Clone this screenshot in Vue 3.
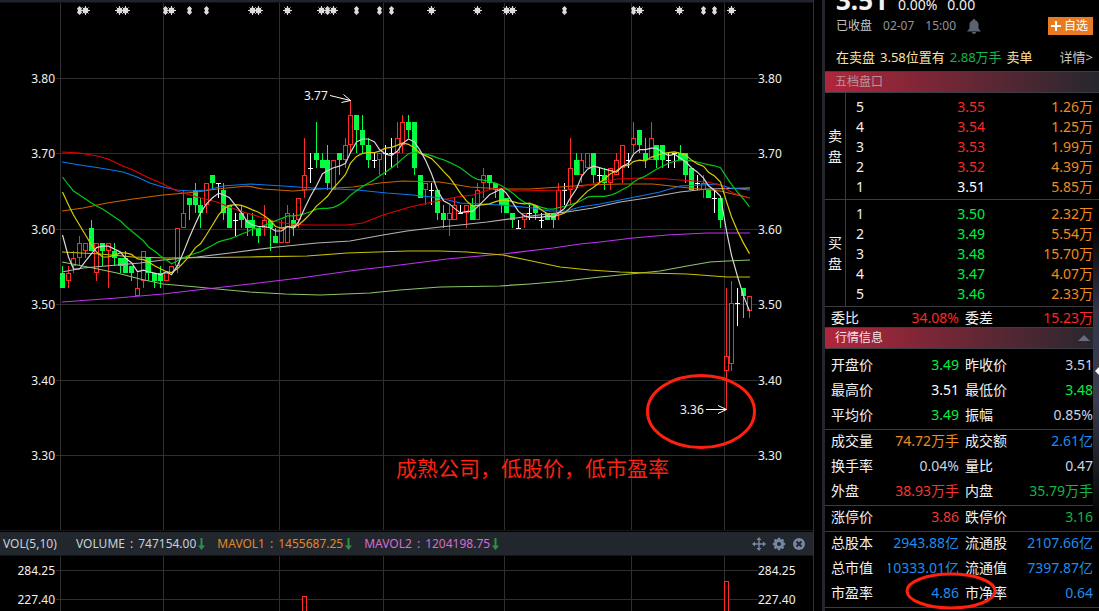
<script setup>
const FIRST_X = 62.3
const STEP = 5.773

const xAt = (i) => Math.floor(FIRST_X + i * STEP)
const yAt = (cents) => 77.2 + (380 - cents) * 7.54

// kind (u = up, d = down, n = unchanged), high, body top, body bottom, low; prices in cents
const session = `
d355,354,352,352 u355,354,353,352 u357,356,355,354 u359,358,356,355 u358,358,357,356 d361,360,357,357
u358,358,354,353 d358,358,357,355 u358,358,357,352 d358,357,356,355 d356,356,355,354 d357,356,354,354
d355,355,354,353 u354,352,351,351 u357,357,353,352 d356,356,354,353 d354,354,353,352 d355,354,353,352
u354,354,353,353 u355,355,354,354 u360,360,355,354 u365,362,360,360 d364,364,363,361 d366,365,363,362
d364,363,362,360 u366,366,363,362 d367,367,366,365 n366,366,366,364 d366,365,362,361 d363,363,360,360
n362,361,361,359 d363,362,361,360 d362,361,360,359 d362,361,360,359 d360,360,359,358 u363,361,360,359
d361,361,360,357 d360,359,358,358 u361,360,358,358 u363,362,358,358 d362,361,360,359 u364,364,361,360
u372,367,365,364 n370,368,368,366 d374,370,369,368 d370,369,368,368 d371,369,366,365 u369,369,365,365
d370,370,369,367 u372,371,369,368 u377,375,371,370 d375,375,373,370 d375,373,371,370 d372,371,369,368
n370,369,369,368 u370,370,369,367 n371,370,370,367 n372,370,370,368 u374,372,370,368 u375,374,371,370
d375,374,373,372 d374,374,368,367 d367,367,364,364 u366,366,365,363 n366,365,365,363 d365,365,362,361
d363,362,361,360 u363,362,361,359 u364,363,361,361 n363,362,362,362 u363,363,362,360 d364,363,361,361
u366,365,361,361 u368,367,366,364 d367,367,366,365 d366,366,365,364 d365,365,363,362 d364,364,362,362
d362,362,361,360 n361,360,360,360 u362,362,361,360 n363,362,362,361 d363,363,362,361 n362,361,361,360
d362,362,361,361 d362,362,361,360 u366,365,362,361 n366,365,365,363 u372,368,365,363 d370,369,367,367
u370,369,367,366 u370,370,368,368 d370,370,367,366 n368,367,367,366 d368,367,366,365 u368,368,366,365
u370,369,367,367 u371,371,368,366 n370,369,369,368 u374,372,371,370 d373,373,371,370 d372,370,369,368
u374,372,369,369 d371,371,369,368 d371,371,369,368 n370,369,369,368 n370,370,370,368 d371,370,369,369
d370,370,367,366 d368,368,365,365 n367,366,366,365 u367,366,365,364 d365,365,364,364 n365,364,364,362
d364,364,361,360 u352,343,341,336 u353,350,342,341 n352,350,350,347 d352,352,351,348 u351,351,349,348`

const days = session.trim().split(/\s+/).map((entry) => {
  const [high, top, bottom, low] = entry.slice(1).split(',').map(Number)
  const kind = entry[0]
  return { kind, high, top, bottom, low, close: kind === 'u' ? top : bottom }
})

const candles = days.map((d, i) => ({
  kind: d.kind,
  x: xAt(i),
  high: Math.round(yAt(d.high)),
  top: Math.round(yAt(d.top)),
  bottom: Math.round(yAt(d.bottom)),
  low: Math.round(yAt(d.low)),
}))

function movingAverage(period, leadIn) {
  const pts = leadIn.map((y, i) => `${xAt(i) + 0.5},${y}`)
  for (let i = leadIn.length; i < days.length; i++) {
    let sum = 0
    for (let k = i - period + 1; k <= i; k++) sum += days[k].close
    pts.push(`${xAt(i) + 0.5},${yAt(sum / period).toFixed(1)}`)
  }
  return pts.join(' ')
}

const averages = [
  { color: '#8cc46a', points: '62,262 93,268 117,273 140,279 163,284 197,287 217,289 250,292 285,294 320,295 370,293 400,290 440,287 500,286 530,284 565,281 600,277 620,275 660,271 687,266 710,262 727,261 750,260' },
  { color: '#bf33f0', points: '62,302 117,298 163,294 197,290 250,284 300,278 350,271 400,265 447,259 503,254 553,248 580,244 600,242 633,238 667,235 707,233 750,233' },
  { color: '#c9c000', points: '62,252 100,254 133,257 167,258 250,257 307,256 347,253 407,251 440,251 467,252 503,255 527,260 560,267 590,270 620,272 647,273 687,274 727,277 750,277' },
  { color: '#b4b4b4', points: '62,272 83,268 117,265 140,263 163,260 197,257 230,253 277,247 317,243 350,241 383,235 407,231 440,227 460,225 487,222 523,217 547,214 567,212 593,208 620,202 647,198 680,192 707,189 750,188' },
  { color: '#c86400', points: '62,211 83,208 107,203 133,199 163,195 197,192 217,189 247,186 263,189 293,191 320,189 353,187 380,183 403,181 440,182 470,187 503,189 530,189 560,187 587,185 620,184 653,184 680,187 700,189 720,191 750,198' },
  { color: '#0a78f0', points: '62,162 80,165 100,168 123,172 137,177 150,183 163,187 177,190 190,191 207,190 223,186 250,184 283,186 313,188 357,190 387,193 413,195 440,198 460,203 500,205 533,208 550,211 567,211 580,207 600,204 630,198 660,192 680,186 700,185 717,184 730,188 750,190' },
  { color: '#e60000', points: '62,152 80,153 97,156 108,159 123,166 133,170 147,177 163,184 177,191 197,197 217,202 237,210 260,217 273,221 290,224 307,225 347,225 363,223 383,215 410,207 437,201 457,197 473,195 488,190 500,188 517,191 563,190 580,187 600,182 617,179 640,178 667,179 707,182 720,185 733,193 750,198' },
  { color: '#00c814', points: movingAverage(20, [177, 185, 191, 195, 199, 203, 206, 209, 213, 217, 221, 226, 231, 236, 241, 247, 251, 256, 260]) },
  { color: '#d8cc00', points: movingAverage(10, [192, 205, 215, 225, 235, 245, 252, 257, 257]) },
  { color: '#d8d8d8', points: movingAverage(5, [235, 257, 269, 269]) },
]

const columns = [60, 163, 279, 383, 504, 631, 724]
const priceLevels = [
  { y: 78, label: '3.80' },
  { y: 153, label: '3.70' },
  { y: 229, label: '3.60' },
  { y: 304, label: '3.50' },
  { y: 380, label: '3.40' },
  { y: 455, label: '3.30' },
]
const volumeLevels = [
  { y: 570, label: '284.25' },
  { y: 599, label: '227.40' },
]

const stars = [85, 119, 125, 171, 252, 258, 287, 321, 333, 431, 477, 506, 512, 639, 679, 731]
const diamonds = [79, 165, 189, 206, 327, 356, 379, 391, 564, 633, 703, 714]

const indicators = [
  { cls: 'vol', name: 'VOLUME', value: '747154.00' },
  { cls: 'ma1', name: 'MAVOL1', value: '1455687.25' },
  { cls: 'ma2', name: 'MAVOL2', value: '1204198.75' },
]

const book = [
  {
    side: '卖盘',
    rows: [
      ['5', '3.55', '1.26万', 'red'],
      ['4', '3.54', '1.25万', 'red'],
      ['3', '3.53', '1.99万', 'red'],
      ['2', '3.52', '4.39万', 'red'],
      ['1', '3.51', '5.85万', 'white'],
    ],
  },
  {
    side: '买盘',
    rows: [
      ['1', '3.50', '2.32万', 'green'],
      ['2', '3.49', '5.54万', 'green'],
      ['3', '3.48', '15.70万', 'green'],
      ['4', '3.47', '4.07万', 'green'],
      ['5', '3.46', '2.33万', 'green'],
    ],
  },
]

const quoteGroups = [
  [
    ['开盘价', '3.49', 'green', '昨收价', '3.51', 'pale'],
    ['最高价', '3.51', 'white', '最低价', '3.48', 'green'],
    ['平均价', '3.49', 'green', '振幅', '0.85%', 'pale'],
  ],
  [
    ['成交量', '74.72万手', 'orange', '成交额', '2.61亿', 'blue'],
    ['换手率', '0.04%', 'pale', '量比', '0.47', 'pale'],
    ['外盘', '38.93万手', 'rose', '内盘', '35.79万手', 'leaf'],
  ],
  [['涨停价', '3.86', 'rose', '跌停价', '3.16', 'leaf']],
  [
    ['总股本', '2943.88亿', 'blue', '流通股', '2107.66亿', 'blue'],
    ['总市值', '10333.01亿', 'blue', '流通值', '7397.87亿', 'blue'],
    ['市盈率', '4.86', 'blue', '市净率', '0.64', 'blue'],
  ],
]
</script>

<template>
  <div class="app">
    <main class="charts">
      <div class="top-strip"></div>
      <svg class="plot" viewBox="0 3 813 529" role="img" aria-label="日K线">
        <g class="grid">
          <rect v-for="x in columns" :key="x" :x="x" y="3" width="1" height="527" />
          <rect v-for="l in priceLevels" :key="l.y" x="56" :y="l.y" width="702" height="1" />
          <rect class="rule" x="0" y="530" width="813" height="1" />
        </g>
        <g class="marks">
          <g v-for="x in stars" :key="'s' + x">
            <circle :cx="x + 0.5" cy="10.5" r="2.9" />
            <path :d="`M${x + 0.5} 6v9M${x - 4} 10.5h9M${x - 2.5} 7.5l6 6M${x - 2.5} 13.5l6 -6`" />
          </g>
          <path
            v-for="x in diamonds"
            :key="'d' + x"
            :d="`M${x + 0.5} 6l2.5 2.5l-1 2l1 2l-2.5 2.5l-2.5 -2.5l1 -2l-1 -2z`"
          />
        </g>
        <g class="candles">
          <g v-for="c in candles" :key="c.x" :class="c.kind">
            <template v-if="c.kind === 'u'">
              <rect :x="c.x" :y="c.high" width="1" :height="c.top - c.high" />
              <rect :x="c.x" :y="c.bottom" width="1" :height="c.low - c.bottom" />
              <rect class="hollow" :x="c.x - 1.5" :y="c.top + 0.5" width="4" :height="c.bottom - c.top - 1" />
            </template>
            <template v-else>
              <rect :x="c.x" :y="c.high" width="1" :height="c.low - c.high" />
              <rect :x="c.x - 2" :y="c.top" width="5" :height="Math.max(1, c.bottom - c.top)" />
            </template>
          </g>
        </g>
        <polyline v-for="(a, i) in averages" :key="i" class="average" :stroke="a.color" :points="a.points" />
        <g class="axis">
          <template v-for="l in priceLevels" :key="l.label">
            <text x="55" :y="l.y + 5" text-anchor="end">{{ l.label }}</text>
            <text x="758" :y="l.y + 5">{{ l.label }}</text>
          </template>
          <text x="304" y="100">3.77</text>
          <text x="680" y="414">3.36</text>
        </g>
        <g class="pointer">
          <path d="M330 95.5L350.5 100.5M343.5 94.5L350.5 100.5L341.5 102.5" />
          <path d="M706 409.5H726M718 405.5L726.5 409.5L718 413.5" />
        </g>
        <ellipse class="ring" cx="701" cy="411.5" rx="53.5" ry="36" />
        <text class="remark" x="396" y="476">成熟公司，低股价，低市盈率</text>
      </svg>

      <div class="vol-bar">
        <span class="vol-name">VOL(5,10)</span>
        <span v-for="n in indicators" :key="n.cls" class="indicator" :class="n.cls">
          <span>{{ n.name }}</span><span>:</span><span>{{ n.value }}</span>
          <svg class="down" width="7" height="12" viewBox="0 0 7 12"><path d="M2.5 0h2v7.5H7L3.5 12L0 7.5h2.5z" /></svg>
        </span>
        <span class="tools">
          <button type="button" aria-label="移动">
            <svg width="14" height="14" viewBox="0 0 14 14"><path d="M7 0l2.5 3H7.7v3.3H11V4.5L14 7l-3 2.5V7.7H7.7V11h1.8L7 14l-2.5-3h1.8V7.7H3v1.8L0 7l3-2.5v1.8h3.3V3H4.5z" /></svg>
          </button>
          <button type="button" aria-label="设置">
            <svg width="14" height="14" viewBox="0 0 14 14">
              <circle class="gear" cx="7" cy="7" r="3.5" />
              <path class="teeth" d="M7 .8v2M7 11.2v2M.8 7h2M11.2 7h2M2.6 2.6l1.4 1.4M10 10l1.4 1.4M2.6 11.4L4 10M10 4l1.4-1.4" />
            </svg>
          </button>
          <button type="button" aria-label="关闭">
            <svg width="14" height="14" viewBox="0 0 14 14">
              <circle cx="7" cy="7" r="6" />
              <path class="cross" d="M4.5 4.5l5 5M9.5 4.5l-5 5" />
            </svg>
          </button>
        </span>
      </div>

      <svg class="plot" viewBox="0 556 813 55" role="img" aria-label="成交量">
        <g class="grid">
          <rect v-for="x in columns" :key="x" :x="x" y="556" width="1" height="55" />
          <rect v-for="l in volumeLevels" :key="l.y" x="56" :y="l.y" width="702" height="1" />
        </g>
        <g class="candles u">
          <rect class="hollow" x="302.5" y="596.5" width="4" height="20" />
          <rect class="hollow" x="724.5" y="581.5" width="4" height="40" />
        </g>
        <g class="axis">
          <template v-for="l in volumeLevels" :key="l.label">
            <text x="55" :y="l.y + 5" text-anchor="end">{{ l.label }}</text>
            <text x="758" :y="l.y + 5">{{ l.label }}</text>
          </template>
        </g>
      </svg>
    </main>

    <aside class="side">
      <header class="quote">
        <div class="price-line">
          <strong>3.51</strong><span>0.00%</span><span>0.00</span>
        </div>
        <div class="status-line">
          <span class="state">已收盘</span><span>02-07</span><span>15:00</span>
          <svg class="bell" width="14" height="15" viewBox="0 0 14 15"><path d="M7 0c.8 0 1.200.5 1.200 1.200C10.500 1.800 11.500 3.500 11.500 6v3.500L14 12.500H0L2.500 9.500V6c0-2.500 1-4.200 3.300-4.800C5.800.5 6.200 0 7 0zM5 13h4c0 1.200-.8 2-2 2s-2-.8-2-2z" /></svg>
          <button type="button" class="add">
            <svg width="10" height="10" viewBox="0 0 10 10"><path d="M4 0h2v4h4v2H6v4H4V6H0V4h4z" /></svg>自选
          </button>
        </div>
        <div class="tip-line">
          <span>在卖盘</span><span>3.58位置有</span><em>2.88万手</em><span>卖单</span>
          <a href="#">详情&gt;</a>
        </div>
      </header>

      <h2 class="band dim">五档盘口</h2>
      <section v-for="s in book" :key="s.side" class="book">
        <h3><span v-for="ch in s.side" :key="ch">{{ ch }}</span></h3>
        <table :aria-label="s.side">
          <tbody>
            <tr v-for="r in s.rows" :key="r[1]">
              <th scope="row">{{ r[0] }}</th>
              <td :class="r[3]">{{ r[1] }}</td>
              <td class="orange">{{ r[2] }}</td>
            </tr>
          </tbody>
        </table>
      </section>

      <div class="ratio">
        <table class="pairs">
          <tbody>
            <tr>
              <th scope="row">委比</th>
              <td class="red"><div class="value">34.08%</div></td>
              <th scope="row" class="second">委差</th>
              <td class="red"><div class="value">15.23万</div></td>
            </tr>
          </tbody>
        </table>
      </div>

      <h2 class="band">行情信息<i class="fold"></i></h2>
      <div v-for="(g, i) in quoteGroups" :key="i" class="group">
        <table class="pairs">
          <tbody>
            <tr v-for="r in g" :key="r[0]">
              <th scope="row">{{ r[0] }}</th>
              <td :class="r[2]">
                <div class="value">{{ r[1] }}</div>
                <svg v-if="r[0] === '市盈率'" class="circle-mark" width="92" height="38" viewBox="0 0 92 38">
                  <ellipse class="ring" cx="46" cy="19" rx="44" ry="17" />
                </svg>
              </td>
              <th scope="row" class="second">{{ r[3] }}</th>
              <td :class="r[5]"><div class="value">{{ r[4] }}</div></td>
            </tr>
          </tbody>
        </table>
      </div>
      <div class="handle"><i></i></div>
    </aside>
  </div>
</template>

<style>
body {
  background: #000;
  overflow: hidden;
}
</style>

<style scoped>
.app {
  display: flex;
  align-items: stretch;
  height: 100vh;
  overflow: hidden;
  background: #000;
  color: #f2f2f2;
  font: 14px/20px "Noto Sans", "Noto Sans CJK SC", sans-serif;
}
button {
  border: 0;
  padding: 0;
  background: none;
  font: inherit;
  cursor: pointer;
}
.charts {
  flex: 1;
  min-width: 0;
  margin-right: 8px;
  border-right: 1px solid #303035;
}
.top-strip {
  height: 2px;
  background: #20252d;
  border-bottom: 1px solid #0e1013;
}
.plot {
  display: block;
  width: 100%;
}
.grid,
.candles {
  shape-rendering: crispEdges;
}
.grid {
  fill: #2f2f2f;
}
.rule {
  fill: #161616;
}
.marks {
  fill: #dcdcdc;
  stroke: none;
}
.marks g path {
  stroke: #dcdcdc;
  stroke-width: 1;
}
.u {
  fill: #ff2b2b;
}
.d {
  fill: #00ff40;
}
.n {
  fill: #fff;
}
.hollow {
  fill: #000;
  stroke: #ff2b2b;
}
.average {
  fill: none;
  stroke-width: 1.2;
}
.axis {
  fill: #f0f0f0;
  font-size: 12px;
}
.pointer {
  fill: none;
  stroke: #fff;
}
.ring {
  fill: none;
  stroke: #ff2010;
  stroke-width: 3;
}
.remark {
  fill: #ff2010;
  font-size: 21px;
}
.vol-bar {
  display: flex;
  align-items: center;
  height: 23px;
  padding: 0 7px 0 3px;
  background: #22272e;
  border-bottom: 1px solid #141619;
  font-size: 12px;
  white-space: nowrap;
}
.vol-name {
  width: 73px;
  color: #c8d0d8;
}
.indicator {
  display: flex;
  align-items: center;
  gap: 5px;
  margin-right: 12px;
}
.vol {
  color: #c8d0d8;
}
.ma1 {
  color: #e08824;
}
.ma2 {
  color: #d66cd2;
}
.down {
  margin-left: -3px;
  fill: #2f9048;
}
.tools {
  display: flex;
  gap: 6px;
  margin-left: auto;
}
.tools svg {
  display: block;
  fill: #7886a4;
}
.tools .gear {
  fill: none;
  stroke: #7886a4;
  stroke-width: 3;
}
.tools .teeth {
  stroke: #7886a4;
  stroke-width: 2.5;
}
.tools .cross {
  stroke: #22272e;
  stroke-width: 2;
}

.side {
  position: relative;
  flex: none;
  width: 274px;
  border-left: 3px solid #25262d;
}
.quote {
  height: 71px;
  padding: 0 6px 0 11px;
}
.price-line {
  display: flex;
  align-items: baseline;
  gap: 10px;
  height: 15px;
  line-height: 9px;
}
.price-line strong {
  font-size: 26px;
  line-height: 1px;
}
.status-line {
  display: flex;
  align-items: center;
  gap: 11px;
  height: 22px;
  color: #92959d;
  font-size: 12px;
}
.state {
  color: #c4c4c4;
}
.bell {
  fill: #5b636f;
}
.add {
  display: flex;
  align-items: center;
  gap: 3px;
  height: 18px;
  margin-left: auto;
  padding: 0 5px 0 3px;
  background: #e87b22;
  color: #fff;
  line-height: 18px;
}
.add svg {
  fill: #fff;
}
.tip-line {
  display: flex;
  gap: 5px;
  margin-top: 10px;
  color: #ffe2a0;
  font-size: 13px;
  white-space: nowrap;
}
.tip-line em {
  color: #12b84c;
  font-style: normal;
}
.tip-line a {
  margin-left: auto;
  color: #c8c8c8;
  text-decoration: none;
}
.band {
  display: flex;
  align-items: center;
  justify-content: space-between;
  height: 20px;
  margin: 0;
  padding: 0 9px 0 10px;
  border-top: 1px solid #3c3f48;
  border-bottom: 1px solid #3c3f48;
  background: linear-gradient(90deg, #b0263c, #26272e);
  color: #f2e4e8;
  font-size: 12px;
  font-weight: 400;
}
.dim {
  color: #b8939d;
}
.fold {
  border: 6px solid transparent;
  border-top-width: 0;
  border-bottom-color: #686c78;
}
.book {
  display: flex;
  height: 106px;
  border-bottom: 1px solid #3a3c42;
}
.book h3 {
  display: flex;
  flex-direction: column;
  align-items: center;
  justify-content: center;
  box-sizing: border-box;
  width: 21px;
  margin: 0;
  border-right: 1px solid #3a3c42;
  font-size: 14px;
  font-weight: 400;
  line-height: 21px;
}
.book table {
  flex: 1;
  margin: 4px 6px 2px 10px;
}
table {
  border-collapse: collapse;
  table-layout: fixed;
}
th,
td {
  padding: 0;
  font-weight: 400;
  text-align: right;
  white-space: nowrap;
}
th {
  text-align: left;
}
.book tr {
  height: 20px;
}
.book th {
  width: 28px;
}
.book td:nth-child(2) {
  width: 101px;
}
.pairs {
  width: 262px;
  margin-left: 6px;
}
.pairs th {
  width: 57px;
}
.pairs .second {
  box-sizing: border-box;
  width: 64px;
  padding-left: 6px;
}
.pairs td {
  position: relative;
}
.pairs td:nth-child(2) {
  width: 71px;
}
.value {
  display: flex;
  justify-content: flex-end;
  overflow: hidden;
}
.ratio {
  height: 19px;
  padding-top: 1px;
}
.group {
  border-bottom: 1px solid #3a3c42;
}
.band + .group {
  padding-top: 5px;
}
.group tr {
  height: 25px;
}
.group th,
.group .value {
  padding-bottom: 4px;
}
.circle-mark {
  position: absolute;
  z-index: 1;
  left: 17px;
  top: -10px;
}
.red {
  color: #ff2626;
}
.rose {
  color: #f53636;
}
.green {
  color: #00f040;
}
.leaf {
  color: #14b44a;
}
.white {
  color: #fff;
}
.pale {
  color: #ccd4e0;
}
.orange {
  color: #f08c1e;
}
.blue {
  color: #1e8cf0;
}
.handle {
  position: absolute;
  right: 0;
  top: 222px;
  display: flex;
  align-items: center;
  justify-content: flex-end;
  width: 6px;
  height: 298px;
  background: linear-gradient(#000, #34374a 30%, #3a3d50 60%, #000);
}
.handle i {
  border: 4px solid transparent;
  border-left-width: 0;
  border-right-color: #fff;
}
</style>
